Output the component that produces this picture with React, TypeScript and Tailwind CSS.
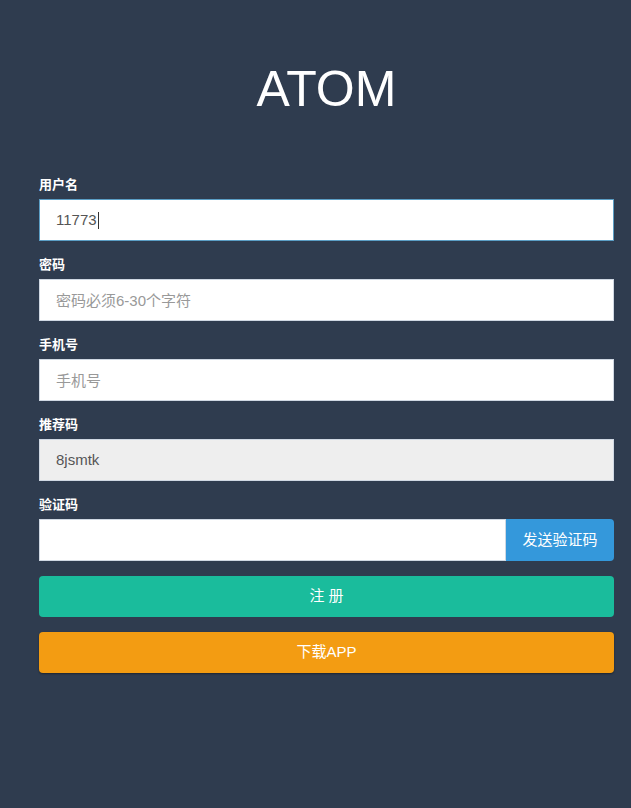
import React from "react";

const font = { fontFamily: '"Liberation Sans", Arial, "Noto Sans CJK SC", sans-serif' };

function Field({ label, children }: { label: string; children: React.ReactNode }) {
  return (
    <div className="flex flex-col">
      <label className="text-[13px] font-bold text-white leading-[16px] mb-[6px]">{label}</label>
      {children}
    </div>
  );
}

export default function App() {
  return (
    <div className="min-h-[808px] bg-[#2f3c4f] w-full" style={font}>
      <div className="pl-[39px] w-[614px]">
        <h1 className="pt-[59px] h-[177px] text-center text-[50px] leading-[60px] text-white font-normal">ATOM</h1>
        <div className="flex flex-col gap-[16px]">
          <Field label="用户名">
            <div className="h-[42px] bg-white border border-[#5b9ec5] flex items-center pl-[16px] text-[15px] text-[#555]">
              11773<span className="inline-block w-px h-[17px] bg-[#333] ml-px"></span>
            </div>
          </Field>
          <Field label="密码">
            <input
              className="h-[42px] bg-white border border-[#cfd8e3] pl-[16px] text-[15px] text-[#555] placeholder:text-[#999] outline-none"
              placeholder="密码必须6-30个字符"
            />
          </Field>
          <Field label="手机号">
            <input
              className="h-[42px] bg-white border border-[#cfd8e3] pl-[16px] text-[15px] text-[#555] placeholder:text-[#999] outline-none"
              placeholder="手机号"
            />
          </Field>
          <Field label="推荐码">
            <div className="h-[42px] bg-[#eeeeee] border border-[#cfd8e3] flex items-center pl-[16px] text-[15px] text-[#555]">
              8jsmtk
            </div>
          </Field>
          <Field label="验证码">
            <div className="flex h-[42px]">
              <input className="flex-1 min-w-0 bg-white border border-[#cfd8e3] outline-none" />
              <button className="w-[108px] bg-[#3498db] text-white text-[15px] rounded-r-[4px]">发送验证码</button>
            </div>
          </Field>
        </div>
        <button className="mt-[15px] w-full h-[41px] rounded-[4px] bg-[#1abc9c] text-white text-[15px]">注 册</button>
        <button className="mt-[15px] w-full h-[41px] rounded-[4px] bg-[#f39c12] text-white text-[15px] shadow-[0_1px_2px_rgba(0,0,0,0.4)]">下载APP</button>
      </div>
    </div>
  );
}
